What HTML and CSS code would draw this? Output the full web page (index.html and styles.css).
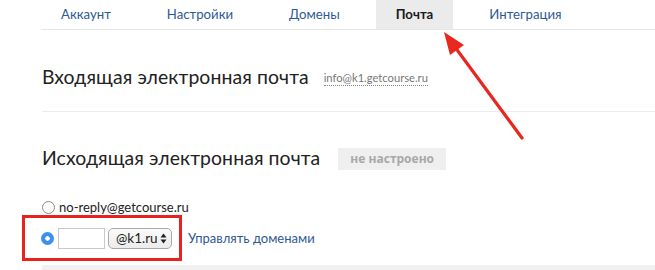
FILE: index.html
```html
<!DOCTYPE html>
<html lang="ru">
<head>
<meta charset="utf-8">
<link rel="stylesheet" href="styles.css">
</head>
<body>
<div class="page">
  <nav class="tabs">
    <a class="tab">Аккаунт</a>
    <a class="tab">Настройки</a>
    <a class="tab">Домены</a>
    <a class="tab active">Почта</a>
    <a class="tab">Интеграция</a>
  </nav>

  <section class="section incoming">
    <h2 class="title">Входящая электронная почта</h2>
    <span class="addr">info@k1.getcourse.ru</span>
  </section>

  <section class="section outgoing">
    <h2 class="title">Исходящая электронная почта</h2>
    <span class="badge">не настроено</span>
  </section>

  <div class="options">
    <label class="opt">
      <span class="radio"></span>
      <span class="opt-text">no-reply@getcourse.ru</span>
    </label>
    <div class="opt custom">
      <div class="highlight">
        <span class="radio checked"></span>
        <span class="input"></span>
        <span class="select">@k1.ru
          <svg class="updown" width="7" height="11" viewBox="0 0 7 11"><path d="M3.5 0.5 L6.5 4.5 L0.5 4.5 Z M3.5 10.5 L6.5 6.5 L0.5 6.5 Z" fill="#222"/></svg>
        </span>
      </div>
      <a class="manage">Управлять доменами</a>
    </div>
  </div>

  <div class="footer-bar"></div>

  <svg class="arrow" width="655" height="270" viewBox="0 0 655 270">
    <line x1="522" y1="138" x2="452" y2="43" stroke="#e8271f" stroke-width="3.2" stroke-linecap="round"/>
    <polygon points="444,32 464,45 450,55" fill="#e8271f"/>
  </svg>
</div>
</body>
</html>
```

FILE: styles.css
```css
* { box-sizing: border-box; }
html, body { margin: 0; padding: 0; background: #fff; }
body {
  font-family: "Lato", "Open Sans", sans-serif;
  color: #222;
  width: 655px;
  height: 270px;
  overflow: hidden;
}
.page {
  position: relative;
  padding-left: 42px;
  height: 270px;
}
.tabs {
  display: flex;
  gap: 16px;
  height: 30px;
  border-bottom: 1px solid #e6e6e6;
  margin-left: -1px;
}
.tab {
  display: flex;
  align-items: center;
  padding: 0 20px 2px;
  height: 29px;
  font-size: 13.2px;
  color: #2d5a95;
  cursor: pointer;
}
.tab.active {
  background: #ebebeb;
  color: #1a1a1a;
  font-weight: 700;
}
.section {
  display: flex;
  align-items: center;
}
.incoming {
  height: 82px;
  border-bottom: 1px solid #ececec;
  padding-top: 12px;
}
.title {
  margin: 0;
  font-size: 19.4px;
  font-weight: 400;
  color: #222;
  letter-spacing: 0.1px;
}
.addr {
  margin-left: 15px;
  font-size: 11.2px;
  color: #777;
  border-bottom: 1px dotted #888;
  line-height: 15px;
  margin-top: 3px;
}
.outgoing {
  height: 72px;
  padding-top: 19px;
}
.badge {
  margin-left: 18px;
  background: #efefef;
  color: #a8a8a8;
  font-family: "Open Sans", sans-serif;
  font-weight: 700;
  font-size: 12px;
  padding: 0 12px;
  height: 22px;
  display: inline-flex;
  align-items: center;
  margin-top: 2px;
}
.options {
  padding-top: 15px;
  display: flex;
  flex-direction: column;
}
.opt {
  display: flex;
  align-items: center;
  font-size: 13px;
  color: #222;
}
.opt-text { margin-left: 4px; }
.radio {
  width: 13px;
  height: 13px;
  border-radius: 50%;
  border: 1px solid #8a8a8a;
  background: #fff;
  display: inline-block;
  flex: none;
}
.radio.checked {
  border: none;
  background: #3b8ff0 radial-gradient(circle, #fff 0 2px, transparent 2.5px);
}
.custom {
  margin-left: -20px;
  margin-top: 0;
}
.highlight {
  display: flex;
  align-items: center;
  border: 3px solid #e8231f;
  width: 160px;
  height: 46px;
  padding-left: 16px;
}
.input {
  width: 47px;
  height: 21px;
  border: 1px solid #c9c9c9;
  margin-left: 4px;
  background: #fff;
}
.select {
  margin-left: 3px;
  height: 21px;
  width: 64px;
  border: 1px solid #a9a9a9;
  border-radius: 5px;
  background: linear-gradient(#fafafa, #ececec);
  display: inline-flex;
  align-items: center;
  justify-content: space-between;
  padding: 0 4px 0 7px;
  font-size: 13.5px;
  color: #222;
}
.updown { flex: none; }
.manage {
  margin-left: 6px;
  font-size: 13px;
  color: #2d5a95;
  cursor: pointer;
}
.footer-bar {
  margin-top: 4px;
  height: 10px;
  background: #f1f1f1;
}
.arrow {
  position: absolute;
  left: 0;
  top: 0;
  pointer-events: none;
}
```
